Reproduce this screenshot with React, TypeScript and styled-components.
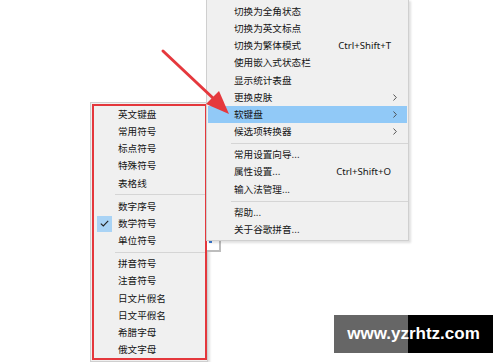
import React from "react";
import styled, { createGlobalStyle } from "styled-components";

const Global = createGlobalStyle`
  html, body { margin: 0; padding: 0; background: #ffffff; }
  body { font-family: "Noto Sans CJK SC", "Noto Sans", sans-serif; }
`;

const Stage = styled.div`
  position: relative;
  width: 500px;
  height: 362px;
  overflow: hidden;
  background: #ffffff;
`;

const Menu = styled.div<{ $left: number; $top: number; $width: number }>`
  position: absolute;
  left: ${(p) => p.$left}px;
  top: ${(p) => p.$top}px;
  width: ${(p) => p.$width}px;
  box-sizing: border-box;
  background: #f0f0f0;
  border: 1px solid #cfcfcf;
  box-shadow: 2px 2px 2px rgba(0, 0, 0, 0.12);
  display: flex;
  flex-direction: column;
  padding: 3px 0 2px 0;
`;

const Item = styled.div<{ $active?: boolean }>`
  height: 17.2px;
  display: grid;
  grid-template-columns: 1fr auto 16px;
  align-items: center;
  padding-left: 26px;
  font-size: 9.6px;
  color: #141414;
  position: relative;
  background: ${(p) => (p.$active ? "#91c9f7" : "transparent")};
  margin: 0 1px;
`;

const Label = styled.span`
  white-space: nowrap;
  line-height: 1;
`;

const Shortcut = styled.span`
  font-family: "Noto Sans", sans-serif;
  font-size: 9.6px;
  color: #141414;
  white-space: nowrap;
  line-height: 1;
`;

const Chevron = styled.svg`
  justify-self: start;
  margin-left: 2px;
`;

const Separator = styled.div`
  height: 6px;
  display: flex;
  align-items: center;
  padding-left: 24px;
  &::after {
    content: "";
    flex: 1;
    height: 1px;
    background: #d5d5d5;
  }
`;

const CheckBox = styled.div`
  position: absolute;
  left: 5px;
  top: 0.5px;
  width: 15px;
  height: 16px;
  background: #a9d3f5;
  display: flex;
  align-items: center;
  justify-content: center;
`;

const RedFrame = styled.div`
  position: absolute;
  left: 1px;
  top: 1px;
  right: 0px;
  bottom: 1px;
  border: 2px solid #e4373c;
  pointer-events: none;
`;

const Overlay = styled.svg`
  position: absolute;
  left: 0;
  top: 0;
  pointer-events: none;
`;

const Fragment = styled.div`
  position: absolute;
  left: 207px;
  top: 240px;
  width: 12px;
  height: 10px;
  background: #ffffff;
  border-right: 2px solid #bdbdbd;
  border-bottom: 2px solid #bdbdbd;
  &::before {
    content: "";
    position: absolute;
    left: 2px;
    top: 1px;
    width: 3px;
    height: 2px;
    background: #3a7bd5;
  }
`;

const Watermark = styled.div`
  position: absolute;
  left: 334px;
  top: 315px;
  width: 159px;
  height: 38px;
  display: flex;
  align-items: center;
  justify-content: center;
  background: linear-gradient(to right, #666666 0, #666666 74px, #000000 74px);
  color: #ffffff;
  font-family: "Liberation Sans", Arial, sans-serif;
  font-weight: bold;
  font-size: 17px;
`;

type Row =
  | { sep: true }
  | { sep?: false; label: string; shortcut?: string; arrow?: boolean; active?: boolean; checked?: boolean };

const mainRows: Row[] = [
  { label: "切换为全角状态" },
  { label: "切换为英文标点" },
  { label: "切换为繁体模式", shortcut: "Ctrl+Shift+T" },
  { label: "使用嵌入式状态栏" },
  { label: "显示统计表盘" },
  { label: "更换皮肤", arrow: true },
  { label: "软键盘", arrow: true, active: true },
  { label: "候选项转换器", arrow: true },
  { sep: true },
  { label: "常用设置向导..." },
  { label: "属性设置...", shortcut: "Ctrl+Shift+O" },
  { label: "输入法管理..." },
  { sep: true },
  { label: "帮助..." },
  { label: "关于谷歌拼音..." },
];

const subRows: Row[] = [
  { label: "英文键盘" },
  { label: "常用符号" },
  { label: "标点符号" },
  { label: "特殊符号" },
  { label: "表格线" },
  { sep: true },
  { label: "数字序号" },
  { label: "数学符号", checked: true },
  { label: "单位符号" },
  { sep: true },
  { label: "拼音符号" },
  { label: "注音符号" },
  { label: "日文片假名" },
  { label: "日文平假名" },
  { label: "希腊字母" },
  { label: "俄文字母" },
];

function renderRows(rows: Row[]) {
  return rows.map((r, i) =>
    r.sep ? (
      <Separator key={i} />
    ) : (
      <Item key={i} $active={r.active}>
        {r.checked && (
          <CheckBox>
            <svg width="9" height="7" viewBox="0 0 9 7">
              <path d="M0.8 3.6 L3.3 6 L8.2 0.8" fill="none" stroke="#222" strokeWidth="1.1" />
            </svg>
          </CheckBox>
        )}
        <Label>{r.label}</Label>
        <Shortcut>{r.shortcut ?? ""}</Shortcut>
        {r.arrow ? (
          <Chevron width="4" height="7" viewBox="0 0 4 7">
            <path d="M0.5 0.5 L3.3 3.5 L0.5 6.5" fill="none" stroke="#444" strokeWidth="0.9" />
          </Chevron>
        ) : (
          <span />
        )}
      </Item>
    )
  );
}

export default function App() {
  return (
    <Stage>
      <Global />
      <Menu $left={90} $top={102} $width={118}>
        {renderRows(subRows)}
        <RedFrame />
      </Menu>
      <Fragment />
      <Menu $left={206} $top={-1} $width={203}>
        {renderRows(mainRows)}
      </Menu>
      <Overlay width="500" height="362" viewBox="0 0 500 362">
        <line x1="163" y1="51" x2="214" y2="99" stroke="#e5383d" strokeWidth="3" strokeLinecap="round" />
        <polygon points="229,114 206,104 219,91" fill="#e5383d" />
      </Overlay>
      <Watermark>www.yzrhtz.com</Watermark>
    </Stage>
  );
}
